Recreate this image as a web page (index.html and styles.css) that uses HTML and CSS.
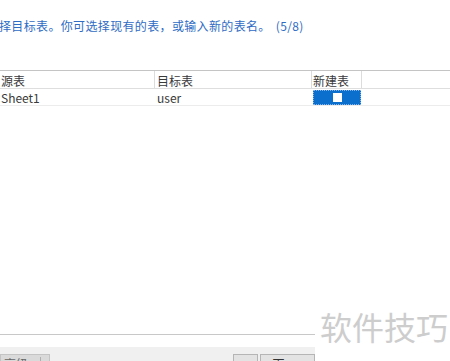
FILE: index.html
```html
<!DOCTYPE html>
<html lang="zh">
<head>
<meta charset="utf-8">
<link rel="stylesheet" href="styles.css">
</head>
<body>
<div class="page">
  <div class="title">择目标表。你可选择现有的表，或输入新的表名。 (5/8)</div>
  <div class="grid">
    <div class="row head">
      <div class="cell c1">源表</div>
      <div class="cell c2">目标表</div>
      <div class="cell c3">新建表</div>
    </div>
    <div class="row data">
      <div class="cell c1">Sheet1</div>
      <div class="cell c2">user</div>
      <div class="cell c3 sel"><span class="check"></span></div>
    </div>
  </div>
  <div class="spacer"></div>
  <div class="sepline"></div>
  <div class="gap"></div>
  <div class="footer">
    <div class="btn split"><span class="btxt">高级</span><span class="bdiv"></span></div>
    <div class="fill"></div>
    <div class="btn small">&lt;</div>
    <div class="btn next">下一步</div>
  </div>
  <div class="watermark">软件技巧</div>
</div>
</body>
</html>
```
FILE: styles.css
```css
html, body {
  margin: 0;
  padding: 0;
  background: #ffffff;
}
.page {
  position: relative;
  width: 450px;
  height: 361px;
  overflow: hidden;
  display: flex;
  flex-direction: column;
  font-family: "Noto Sans CJK SC", "Noto Sans", sans-serif;
  color: #222;
}
.title {
  flex: none;
  height: 70px;
  box-sizing: border-box;
  padding-top: 18px;
  margin-left: -1px;
  font-size: 12px;
  line-height: 16px;
  letter-spacing: 0.35px;
  word-spacing: 2px;
  color: #2f6cc4;
  white-space: nowrap;
}
.grid {
  flex: none;
  border-top: 1px solid #c4c4c4;
}
.row {
  display: flex;
  font-size: 12px;
}
.row.head {
  height: 17px;
  border-bottom: 1px solid #dedede;
  line-height: 19px;
}
.row.data {
  height: 15px;
  line-height: 15px;
  border-bottom: 1px solid #ececec;
  padding-top: 1px;
}
.cell {
  box-sizing: border-box;
  padding-left: 1px;
  color: #3a3a3a;
  white-space: nowrap;
  overflow: hidden;
}
.c1 { width: 155px; }
.c2 { width: 157px; }
.c3 { width: 50px; }
.head .c1, .head .c2, .head .c3 { border-right: 1px solid #dcdcdc; }
.head .c2 { padding-left: 2px; }
.data .c2 { padding-left: 2px; }
.sel {
  width: 48px;
  margin-left: 1px;
  background: #0b6fce;
  border: 1px dotted #8ab4e6;
  display: flex;
  align-items: center;
  justify-content: center;
  padding: 0;
}
.check {
  display: block;
  width: 7px;
  height: 7px;
  background: #ffffff;
  border: 1px solid #ffffff;
}
.spacer {
  flex: 1;
}
.sepline {
  flex: none;
  width: 315px;
  height: 1px;
  background: #c8c8c8;
}
.gap {
  flex: none;
  height: 12px;
}
.footer {
  flex: none;
  box-sizing: border-box;
  width: 315px;
  height: 14px;
  background: #f0f0f0;
  display: flex;
  align-items: flex-start;
  padding-top: 7px;
  overflow: visible;
}
.btn {
  box-sizing: border-box;
  height: 22px;
  border: 1px solid #b5b5b5;
  background: #e3e3e3;
  font-size: 12px;
  line-height: 18px;
  color: #333;
  text-align: center;
}
.split {
  width: 50px;
  display: flex;
  background: #dadada;
  border-color: #c4c4c4;
}
.btxt {
  width: 36px;
  text-align: left;
  padding-left: 3px;
  color: #666;
}
.bdiv {
  width: 1px;
  background: #b0b0b0;
  height: 14px;
  margin-top: 2px;
}
.fill { flex: 1; }
.small {
  width: 25px;
  margin-right: 2px;
  color: #e3e3e3;
}
.next {
  width: 55px;
  letter-spacing: 6px;
  padding-left: 6px;
}
.watermark {
  position: absolute;
  left: 316px;
  top: 300px;
  width: 134px;
  height: 61px;
  background: #ffffff;
  box-sizing: border-box;
  padding-left: 4px;
  padding-top: 6px;
  font-size: 32px;
  line-height: 40px;
  color: #cdcdcd;
  white-space: nowrap;
}
```
